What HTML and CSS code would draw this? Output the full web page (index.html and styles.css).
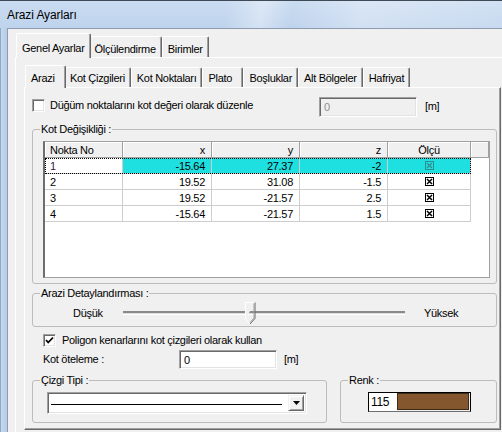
FILE: index.html
```html
<!DOCTYPE html>
<html lang="tr">
<head>
    <meta charset="UTF-8">
    <title>Arazi Ayarları</title>
    <link rel="stylesheet" href="styles.css">
</head>
<body>
    <div class="titlebar">Arazi Ayarları</div>
    <div class="frame">
        <div class="client">
            <div class="tabs outer-tabs">
                <div class="tab active">Genel Ayarlar</div>
                <div class="tab">Ölçülendirme</div>
                <div class="tab">Birimler</div>
            </div>
            <div class="outer-panel">
                <div class="tabs inner-tabs">
                    <div class="tab active">Arazi</div>
                    <div class="tab">Kot Çizgileri</div>
                    <div class="tab">Kot Noktaları</div>
                    <div class="tab">Plato</div>
                    <div class="tab">Boşluklar</div>
                    <div class="tab">Alt Bölgeler</div>
                    <div class="tab">Hafriyat</div>
                </div>
                <div class="inner-panel">
                    <div class="option-row">
                        <span class="checkbox"></span>
                        <span class="option-label">Düğüm noktalarını kot değeri olarak düzenle</span>
                        <span class="textbox disabled">0</span>
                        <span class="unit">[m]</span>
                    </div>

                    <fieldset class="group kot-group">
                        <legend>Kot Değişikliği :</legend>
                        <div class="group-body">
                            <div class="grid">
                                <div class="grid-head">
                                    <span class="left">Nokta No</span>
                                    <span>x</span>
                                    <span>y</span>
                                    <span>z</span>
                                    <span class="center">Ölçü</span>
                                    <span></span>
                                </div>
                                <div class="grid-row selected">
                                    <span>1</span><span>-15.64</span><span>27.37</span><span>-2</span>
                                    <span class="mark"><svg width="9" height="9" viewBox="0 0 9 9"><rect x="0.5" y="0.5" width="8" height="8" fill="none" stroke="#2f8f8f"/><path d="M2 2L7 7M7 2L2 7" stroke="#2f8f8f" stroke-width="1.3"/></svg></span>
                                </div>
                                <div class="grid-row">
                                    <span>2</span><span>19.52</span><span>31.08</span><span>-1.5</span>
                                    <span class="mark"><svg width="9" height="9" viewBox="0 0 9 9"><rect x="0.5" y="0.5" width="8" height="8" fill="#fff" stroke="#000"/><path d="M2 2L7 7M7 2L2 7" stroke="#000" stroke-width="1.5"/></svg></span>
                                </div>
                                <div class="grid-row">
                                    <span>3</span><span>19.52</span><span>-21.57</span><span>2.5</span>
                                    <span class="mark"><svg width="9" height="9" viewBox="0 0 9 9"><rect x="0.5" y="0.5" width="8" height="8" fill="#fff" stroke="#000"/><path d="M2 2L7 7M7 2L2 7" stroke="#000" stroke-width="1.5"/></svg></span>
                                </div>
                                <div class="grid-row">
                                    <span>4</span><span>-15.64</span><span>-21.57</span><span>1.5</span>
                                    <span class="mark"><svg width="9" height="9" viewBox="0 0 9 9"><rect x="0.5" y="0.5" width="8" height="8" fill="#fff" stroke="#000"/><path d="M2 2L7 7M7 2L2 7" stroke="#000" stroke-width="1.5"/></svg></span>
                                </div>
                            </div>
                        </div>
                    </fieldset>

                    <fieldset class="group detail-group">
                        <legend>Arazi Detaylandırması :</legend>
                        <div class="slider-row">
                            <span class="low">Düşük</span>
                            <div class="track">
                                <svg class="thumb" width="11" height="23" viewBox="0 0 11 23">
                                    <path d="M0.5 17V0.5H10" fill="#f0f0f0" stroke="#fff"/>
                                    <path d="M10 0.5V16.5L5 22" fill="none" stroke="#696969"/>
                                    <path d="M9 1.5V16L5 20.5" fill="none" stroke="#a0a0a0"/>
                                    <path d="M0.5 17L4.5 21.5" fill="none" stroke="#fff"/>
                                </svg>
                            </div>
                            <span class="high">Yüksek</span>
                        </div>
                    </fieldset>

                    <div class="check-row">
                        <span class="checkbox">
                            <svg width="11" height="11" viewBox="0 0 11 11"><path d="M2 5L4.2 7.5L9 2.5" fill="none" stroke="#000" stroke-width="1.8"/></svg>
                        </span>
                        <span class="option-label">Poligon kenarlarını kot çizgileri olarak kullan</span>
                    </div>

                    <div class="offset-row">
                        <span class="offset-label">Kot öteleme :</span>
                        <span class="textbox">0</span>
                        <span class="unit">[m]</span>
                    </div>

                    <div class="bottom-groups">
                        <fieldset class="group line-group">
                            <legend>Çizgi Tipi :</legend>
                            <div class="group-body">
                                <div class="combo">
                                    <div class="line-sample"><div class="stroke"></div></div>
                                    <div class="drop-btn">
                                        <svg width="7" height="4" viewBox="0 0 7 4"><path d="M0 0H7L3.5 4Z" fill="#000"/></svg>
                                    </div>
                                </div>
                            </div>
                        </fieldset>
                        <fieldset class="group color-group">
                            <legend>Renk :</legend>
                            <div class="group-body">
                                <div class="swatch-field">
                                    <span class="swatch-value">115</span>
                                    <span class="swatch"></span>
                                </div>
                            </div>
                        </fieldset>
                    </div>
                </div>
            </div>
        </div>
    </div>
</body>
</html>
```

FILE: styles.css
```css
* {
    box-sizing: border-box;
}
body {
    margin: 0;
    width: 502px;
    height: 432px;
    overflow: hidden;
    font-family: 'Liberation Sans', Arial, sans-serif;
    font-size: 11px;
    letter-spacing: -0.3px;
    color: #000;
    background: #bcd2ec;
}
.titlebar {
    height: 28px;
    padding: 7px 0 0 7px;
    border-top: 1px solid #3f4a56;
    font-size: 12px;
    letter-spacing: -0.1px;
    line-height: 15px;
    background:
        linear-gradient(100deg, rgba(255,255,255,0) 45%, rgba(255,255,255,0.35) 52%, rgba(255,255,255,0) 58%, rgba(255,255,255,0.3) 72%, rgba(255,255,255,0.15) 100%),
        linear-gradient(#cadcf1, #bed3ed);
}
.frame {
    height: 404px;
    padding-left: 7px;
    background: linear-gradient(to right, #8fa9c8 0, #8fa9c8 1px, #c4d7ee 1px, #b7cde8 7px);
}
.client {
    height: 100%;
    padding-top: 4px;
    background: #f0f0f0;
    border-top: 1px solid #8e9cad;
    border-left: 1px solid #8e9cad;
    overflow: hidden;
}

/* tabs */
.tabs {
    display: flex;
    align-items: flex-end;
}
.tab {
    min-width: 41px;
    padding: 0 5px;
    line-height: 13px;
    white-space: nowrap;
    border-top: 1px solid #fff;
    border-left: 1px solid #fff;
    border-right: 1px solid #696969;
    box-shadow: inset -1px 0 #a0a0a0;
    border-radius: 2px 2px 0 0;
    background: #f0f0f0;
}
.tab.active {
    position: relative;
    z-index: 1;
    margin: 0 -2px -1px;
}
.outer-tabs {
    height: 24px;
    padding-left: 10px;
}
.outer-tabs .tab {
    height: 21px;
    padding-top: 6px;
}
.outer-tabs .tab.active {
    height: 25px;
    padding-top: 8px;
}
.inner-tabs {
    height: 22px;
    padding-left: 3px;
}
.inner-tabs .tab {
    height: 20px;
    padding-top: 4px;
}
.inner-tabs .tab.active {
    height: 23px;
    padding-top: 6px;
}
.outer-panel {
    width: 520px;
    height: 400px;
    margin-left: 7px;
    padding: 7px 0 0 8px;
    border-top: 1px solid #fff;
    border-left: 1px solid #fff;
}
.inner-panel {
    width: 477px;
    height: 343px;
    padding: 9px 0 0 7px;
    border: 1px solid;
    border-color: #fff #696969 #696969 #fff;
    box-shadow: inset -1px -1px #a0a0a0;
}

/* controls */
.checkbox {
    display: flex;
    align-items: center;
    justify-content: center;
    width: 13px;
    height: 13px;
    background: #fff;
    border: 1px solid;
    border-color: #a0a0a0 #fff #fff #a0a0a0;
    box-shadow: inset 1px 1px #696969, inset -1px -1px #e3e3e3;
}
.textbox {
    display: block;
    width: 98px;
    padding: 3px 0 0 4px;
    line-height: 13px;
    background: #fff;
    border: 1px solid;
    border-color: #a0a0a0 #fff #fff #a0a0a0;
    box-shadow: inset 1px 1px #696969, inset -1px -1px #e3e3e3;
}
.textbox.disabled {
    color: #8d8d8d;
    background: #f0f0f0;
}
.option-row {
    display: flex;
    align-items: flex-start;
    height: 20px;
}
.option-row .checkbox {
    margin-top: 2px;
}
.option-label {
    margin-left: 5px;
    line-height: 13px;
}
.option-row .option-label {
    margin-top: 2px;
    width: 269px;
}
.option-row .textbox {
    height: 20px;
}
.unit {
    margin-left: 8px;
    margin-top: 3px;
    line-height: 13px;
}

/* group boxes */
.group {
    margin: 0;
    padding: 0;
    min-width: 0;
    border: 1px solid #bcbcbc;
    border-radius: 3px;
}
.group legend {
    margin-left: 7px;
    padding: 0 1px;
    line-height: 13px;
}
.kot-group {
    width: 465px;
    margin-top: 6px;
}
.kot-group .group-body {
    padding: 5px 6px 5px 10px;
}
.grid {
    height: 137px;
    background: #fff;
    border: 1px solid #a0a0a0;
    border-left: 2px solid #6e6e6e;
}
.grid-head {
    display: grid;
    grid-template-columns: 78px 89px 88px 88px 83px 1fr;
    height: 16px;
}
.grid-head span {
    padding: 2px 6px 0;
    line-height: 13px;
    text-align: right;
    background: #f0f0f0;
    border-right: 1px solid #a0a0a0;
    border-bottom: 1px solid #a0a0a0;
    box-shadow: inset 1px 1px #fff;
}
.grid-head span.left {
    padding-left: 5px;
    text-align: left;
}
.grid-head span.center {
    text-align: center;
}
.grid-row {
    display: grid;
    grid-template-columns: 78px 89px 88px 88px 83px;
    width: 426px;
    height: 16px;
}
.grid-row span {
    padding: 2px 6px 0;
    line-height: 13px;
    text-align: right;
    border-right: 1px solid #cdcdcd;
    border-bottom: 1px solid #cdcdcd;
}
.grid-row span:first-child {
    padding-left: 5px;
    text-align: left;
}
.grid-row span.mark {
    display: flex;
    align-items: center;
    justify-content: center;
    padding: 0;
}
.grid-row.selected {
    outline: 1px dotted #000;
    outline-offset: -1px;
}
.grid-row.selected span {
    background: #1fe0e0;
}
.grid-row.selected span:first-child {
    background: #fff;
    color: #401a48;
}

.detail-group {
    width: 465px;
    margin-top: 3px;
}
.slider-row {
    display: flex;
    align-items: center;
    height: 26px;
    padding: 0 0 1px 40px;
}
.slider-row .low {
    width: 50px;
}
.track {
    position: relative;
    width: 282px;
    height: 4px;
    background: #dcdcdc;
    border-top: 2px solid #8a8a8a;
    border-bottom: 1px solid #fff;
}
.thumb {
    position: absolute;
    left: 122px;
    top: -11px;
}
.slider-row .high {
    margin-left: 19px;
}

.check-row {
    display: flex;
    align-items: flex-start;
    height: 16px;
    margin-top: 6px;
    padding-left: 11px;
}
.check-row .checkbox {
    margin-top: 1px;
}
.check-row .option-label {
    margin: 1px 0 0 6px;
}
.offset-row {
    display: flex;
    align-items: flex-start;
    height: 19px;
    margin-top: 1px;
    padding-left: 11px;
}
.offset-label {
    width: 136px;
    margin-top: 3px;
    line-height: 13px;
}
.offset-row .textbox {
    height: 19px;
}
.offset-row .unit {
    margin-left: 7px;
}

.bottom-groups {
    display: flex;
    gap: 13px;
    margin-top: 5px;
}
.line-group {
    width: 295px;
}
.line-group .group-body {
    padding: 5px 0 8px 14px;
}
.combo {
    display: flex;
    width: 260px;
    height: 22px;
    padding: 2px;
    background: #fff;
    border: 1px solid;
    border-color: #a0a0a0 #fff #fff #a0a0a0;
    box-shadow: inset 1px 1px #696969, inset -1px -1px #e3e3e3;
}
.line-sample {
    flex: 1;
    display: flex;
    align-items: center;
    margin: 0 6px 0 1px;
    padding-top: 3px;
}
.stroke {
    width: 100%;
    height: 1px;
    background: #000;
}
.drop-btn {
    display: flex;
    align-items: center;
    justify-content: center;
    width: 16px;
    background: #f0f0f0;
    border: 1px solid;
    border-color: #f0f0f0 #696969 #696969 #f0f0f0;
    box-shadow: inset 1px 1px #fff, inset -1px -1px #a0a0a0;
}
.color-group {
    width: 157px;
}
.color-group .group-body {
    padding: 5px 0 8px 27px;
}
.swatch-field {
    display: flex;
    width: 103px;
    height: 20px;
    border-top: 1px solid #000;
    border-left: 1px solid #000;
    border-right: 1px solid #000;
    border-bottom: 1px solid #6e6e6e;
}
.swatch-value {
    width: 28px;
    padding: 3px 0 0 2px;
    font-size: 12px;
    line-height: 13px;
    background: #fff;
}
.swatch {
    flex: 1;
    margin: 0 1px 1px 0;
    background: #85572e;
    border: 1px solid #3d2a18;
}
```
